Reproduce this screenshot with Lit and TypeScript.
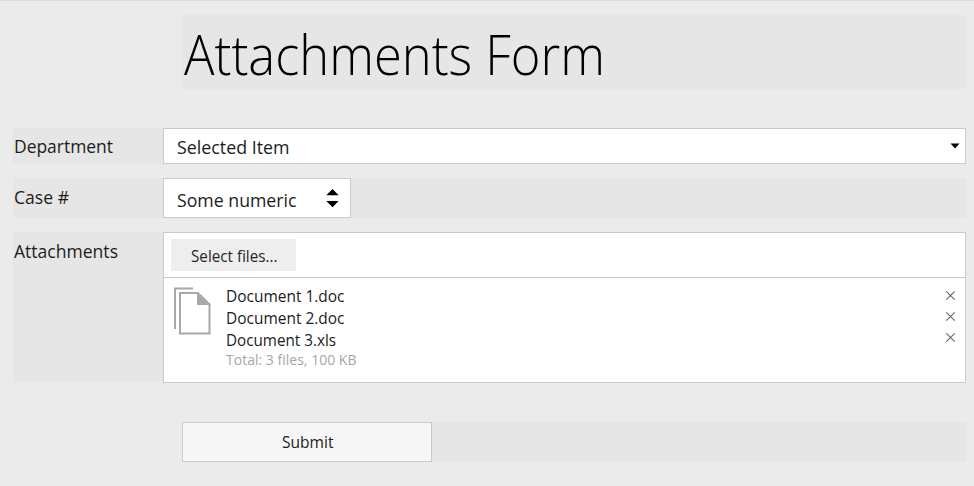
import { LitElement, html, css, svg } from "lit";
import { customElement, property } from "lit/decorators.js";

/** One line of text, condensed or widened to a set width. */
@customElement("fit-text")
class FitText extends LitElement {
  @property() text = "";
  @property({ type: Number }) width = 100;
  @property({ type: Number }) size = 16;
  @property({ type: Number }) weight = 400;

  static styles = css`
    :host { display: block; flex: none; line-height: 0; }
    svg { display: block; overflow: visible; }
    text { font-family: "Open Sans", "Noto Sans", sans-serif; fill: currentColor; }
  `;

  render() {
    return html`<svg width=${this.width} height=${this.size}>
      ${svg`<text x="0" y=${this.size * 0.8} font-size=${this.size} font-weight=${this.weight}
        textLength=${this.width} lengthAdjust="spacingAndGlyphs">${this.text}</text>`}
    </svg>`;
  }
}

@customElement("app-root")
class AppRoot extends LitElement {
  static styles = css`
    :host {
      display: block; box-sizing: border-box; width: 974px; height: 486px;
      background: #ebebeb; color: #1c1c1c; overflow: hidden;
      border-top: 1px solid #dcdcdc; padding: 13px 8px 0 13px;
      font-family: "Open Sans", "Noto Sans", sans-serif;
    }
    * { box-sizing: border-box; }
    .title { margin: 1px 0 0 169px; height: 74px; background: #e6e6e6; padding: 16px 0 0 2px; color: #000; }
    .row { display: flex; background: #e6e6e6; }
    .label { width: 150px; flex: none; padding-left: 0.5px; }
    .dept { height: 36px; margin-top: 39px; }
    .dept .label { padding-top: 10px; }
    .case { height: 40px; margin-top: 14px; }
    .case .label { padding-top: 11px; }
    .files { height: 151px; margin-top: 14px; }
    .files .label { padding-top: 11px; }
    .box { background: #fff; border: 1px solid #cacaca; }
    .select { flex: 1; display: flex; justify-content: space-between; padding: 10px 5px 0 13px; }
    .number { width: 188px; display: flex; justify-content: space-between; padding: 13px 11px 0 13px; }
    .caret { display: block; margin-top: 4px; }
    .spin { display: block; margin-top: -3.6px; }
    .upload { flex: 1; display: flex; flex-direction: column; }
    .bar { height: 45px; border-bottom: 1px solid #cacaca; padding: 6px 7px; }
    .pick { width: 125px; height: 32px; background: #eee; padding: 11px 0 0 19.5px; color: #262626; }
    .list { display: flex; padding: 9px 9px 0 9px; }
    .docs { display: block; margin-right: 15px; }
    .names { flex: 1; padding-top: 2px; display: grid; grid-template-rows: 22px 21.7px 20.8px 20px; }
    .total { color: #a6a6a6; }
    .crosses { display: grid; grid-template-rows: repeat(3, 21.3px); padding-top: 2.5px; }
    .submit { height: 40px; margin: 39px 0 0 169px; }
    .button { width: 250px; background: #f7f7f7; padding: 12.2px 0 0 98.5px; color: #222; }
  `;

  render() {
    return html`
      <div class="title"><fit-text text="Attachments Form" width="421" size="54.5" weight="300"></fit-text></div>
      <div class="row dept">
        <div class="label"><fit-text text="Department" width="99" size="18.5"></fit-text></div>
        <div class="box select">
          <fit-text text="Selected Item" width="112.5" size="18.5"></fit-text>
          <svg class="caret" width="10" height="6"><path d="M0.5 0.5H9.5L5 5.5Z"/></svg>
        </div>
      </div>
      <div class="row case">
        <div class="label"><fit-text text="Case #" width="55" size="18.5"></fit-text></div>
        <div class="box number">
          <fit-text text="Some numeric" width="119.5" size="18.5"></fit-text>
          <svg class="spin" width="13" height="20"><path d="M6.5 1L12.7 7.3H0.3ZM0.3 13H12.7L6.5 19.3Z"/></svg>
        </div>
      </div>
      <div class="row files">
        <div class="label"><fit-text text="Attachments" width="104" size="18.5"></fit-text></div>
        <div class="box upload">
          <div class="bar"><div class="pick"><fit-text text="Select files..." width="86.5" size="15.5"></fit-text></div></div>
          <div class="list">
            <svg class="docs" width="38" height="48" fill="none" stroke="#a8a8a8" stroke-width="2">
              <path d="M2 42V1.5H20M7 6H25L36.5 17.5V46.5H7Z"/>
              <path d="M24 6V18H36.5Z" fill="#a8a8a8" stroke="none"/>
            </svg>
            <div class="names">
              <fit-text text="Document 1.doc" width="118.5" size="15.8"></fit-text>
              <fit-text text="Document 2.doc" width="118.5" size="15.8"></fit-text>
              <fit-text text="Document 3.xls" width="110" size="15.8"></fit-text>
              <fit-text class="total" text="Total: 3 files, 100 KB" width="130.5" size="15"></fit-text>
            </div>
            <div class="crosses">
              ${[1, 2, 3].map(() => html`<svg width="11" height="11" stroke="#666" stroke-width="1.1"><path d="M1.3 1.3L9.7 9.7M9.7 1.3L1.3 9.7"/></svg>`)}
            </div>
          </div>
        </div>
      </div>
      <div class="row submit">
        <div class="box button"><fit-text text="Submit" width="51.5" size="15.8"></fit-text></div>
      </div>
    `;
  }
}
